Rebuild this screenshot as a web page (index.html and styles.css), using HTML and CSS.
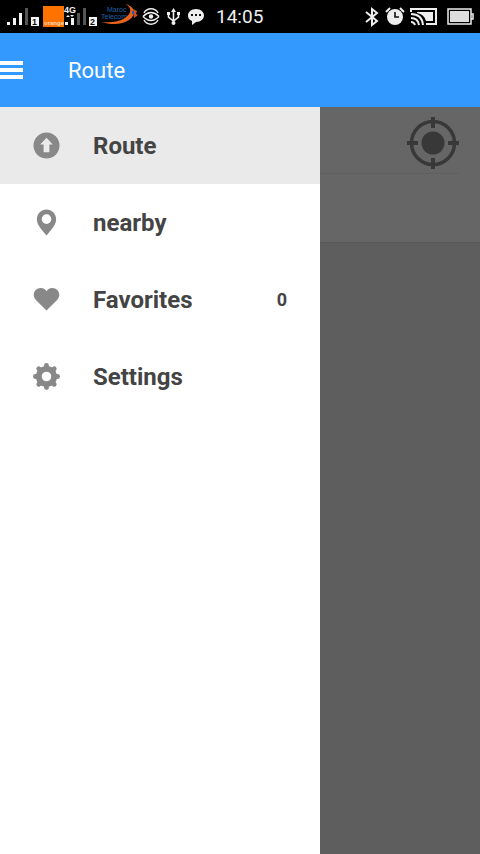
FILE: index.html
```html
<!DOCTYPE html>
<html lang="en">
<head>
<meta charset="utf-8">
<meta name="viewport" content="width=device-width, initial-scale=1">
<title>Route</title>
<link rel="stylesheet" href="styles.css">
</head>
<body>
<div class="status">
  <svg width="41" height="33" viewBox="0 0 41 33" aria-hidden="true">
    <path fill="#f4f4f4" d="M7 22h3v3H7zM13 18h3v7h-3zM19 13h3v12h-3z"/>
    <path fill="#555" d="M25 8h3v17h-3z"/>
    <rect x="31" y="17" width="8" height="9" fill="#f4f4f4"/>
    <text x="32" y="25" class="sim">1</text>
  </svg>
  <svg width="23" height="33" viewBox="0 0 23 33" aria-hidden="true">
    <rect x="2" y="6" width="21" height="21" fill="#ff7200"/>
    <text x="3" y="25" class="orange">orange</text>
  </svg>
  <svg width="34" height="33" viewBox="0 0 34 33" aria-hidden="true">
    <text x="0" y="13" class="net">4G</text>
    <path fill="#f4f4f4" d="M1 22h3v3H1zM7 18h3v7H7zM2 17l2-2 2 2zM6 15h4l-2 2z"/>
    <path fill="#555" d="M13 13h3v12h-3zM19 8h3v17h-3z"/>
    <rect x="25" y="17" width="8" height="9" fill="#f4f4f4"/>
    <text x="26" y="25" class="sim">2</text>
  </svg>
  <svg width="42" height="33" viewBox="0 0 42 33" aria-hidden="true">
    <text x="9" y="12" class="maroc">Maroc</text>
    <text x="3" y="19" class="maroc">Telecom</text>
    <path fill="#e8621c" d="M27 4c10 2 12 11 4 16-7 5-18 5-28 2 10 1 18 0 24-4 7-5 7-11 0-14z"/>
    <path fill="#c9521c" d="M35 9l4 2-1 3 2 1-4 3z"/>
    <path fill="#2360a8" d="M34 11h2v3h-2z"/>
  </svg>
  <svg width="22" height="33" viewBox="0 0 22 33" fill="none" stroke="#eee" stroke-width="1.5" aria-hidden="true">
    <path d="M4 13a8 8 0 0 1 14 0M4 20a8 8 0 0 0 14 0"/>
    <path d="M3 16.500q8-8 16 0M3 16.500q8 8 16 0"/>
    <circle cx="11" cy="16.500" r="2.200" fill="#eee" stroke="none"/>
  </svg>
  <svg width="23" height="33" viewBox="0 0 23 33" fill="none" stroke="#eee" stroke-width="1.6" aria-hidden="true">
    <path d="M11.500 11v13M6.500 13v4l5 4 5-4v-4"/>
    <path fill="#eee" stroke="none" d="M11.500 8l2.500 4H9zM5 12h3v3H5zM15 12h3v3h-3z"/>
    <circle cx="11.500" cy="23" r="2" fill="#eee" stroke="none"/>
  </svg>
  <svg width="25" height="33" viewBox="0 0 25 33" aria-hidden="true">
    <path fill="#eee" d="M11 9c5 0 8 3 8 6.500S16 22 11 22l-4 3v-4c-3-1-4-3-4-5.500C3 12 6 9 11 9z"/>
    <path fill="#111" d="M6 14h2v2H6zM10 14h2v2h-2zM14 14h2v2h-2z"/>
  </svg>
  <time class="clock">14:05</time>
  <div class="system">
    <svg width="16" height="33" viewBox="0 0 16 33" fill="none" stroke="#eee" stroke-width="2" aria-hidden="true">
      <path d="M2 12l11 9-5 4V9l5 4-11 9"/>
    </svg>
    <svg width="20" height="33" viewBox="0 0 20 33" aria-hidden="true">
      <circle cx="10" cy="17" r="8" fill="#eee"/>
      <path d="M1 12l4-4M19 12l-4-4" stroke="#eee" stroke-width="2"/>
      <path d="M10 12v5h4" fill="none" stroke="#111" stroke-width="1.600"/>
    </svg>
    <svg width="28" height="33" viewBox="0 0 28 33" fill="none" stroke="#eee" stroke-width="2" aria-hidden="true">
      <path d="M1 12V9h25v15H16"/>
      <path fill="#eee" stroke="none" d="M7 12h16v9h-7q-2-7-9-8z"/>
      <path d="M1 14q11 0 12 11M1 18q7 0 8 7M1 22q3 0 4 3"/>
    </svg>
    <svg class="battery" width="28" height="33" viewBox="0 0 28 33" aria-hidden="true">
      <path fill="none" stroke="#eee" stroke-width="1.500" d="M1 9h23v15H1zM24 14h2v5h-2"/>
      <path fill="#ddd" d="M3 11h19v11H3z"/>
    </svg>
  </div>
</div>

<header class="appbar">
  <button class="menu" type="button" aria-label="Menu">
    <svg width="24" height="20" viewBox="0 0 24 20" fill="#fff" aria-hidden="true"><path d="M0 1h23v4H0zM0 8h23v4H0zM0 15h23v4H0z"/></svg>
  </button>
  <h1 class="title">Route</h1>
</header>

<div class="body">
  <nav class="drawer">
    <a class="item active" href="#route">
      <svg class="icon" viewBox="0 0 28 28" aria-hidden="true"><path fill-rule="evenodd" d="M14 .5a13.500 13.500 0 1 0 0 27 13.500 13.500 0 0 0 0-27zM14 6l6.500 7H17v8h-6v-8H7.500z"/></svg>
      <span class="label">Route</span>
    </a>
    <a class="item" href="#nearby">
      <svg class="icon" viewBox="0 0 28 28" aria-hidden="true"><path fill-rule="evenodd" d="M14 .5C8.500.5 4 5 4 10.500 4 17 10 22 14 27.500 18 22 24 17 24 10.500 24 5 19.500.5 14 .5zM14 5.500a5 5 0 1 1 0 10 5 5 0 0 1 0-10z"/></svg>
      <span class="label">nearby</span>
    </a>
    <a class="item" href="#favorites">
      <svg class="icon" viewBox="0 0 28 28" aria-hidden="true"><path d="M14 25.500L3 14.500C-2 9 2 2 8 2c3 0 5 1.500 6 3.500C15 3.500 17 2 20 2c6 0 10 7 5 12.500z"/></svg>
      <span class="label">Favorites</span>
      <span class="count">0</span>
    </a>
    <a class="item" href="#settings">
      <svg class="icon" viewBox="0 0 28 28" aria-hidden="true">
        <path fill-rule="evenodd" d="M14 3a11 11 0 1 0 0 22 11 11 0 0 0 0-22zM14 9a5 5 0 1 1 0 10 5 5 0 0 1 0-10z"/>
        <path fill="none" stroke="#888" stroke-width="5" stroke-linecap="round" d="M14 2.500V5M14 23v2.500M2.500 14H5M23 14h2.500M6 6l1.600 1.600M20.400 20.400L22 22M22 6l-1.600 1.600M7.600 20.400L6 22"/>
      </svg>
      <span class="label">Settings</span>
    </a>
  </nav>
  <main class="page">
    <div class="search">
      <div class="field">
        <button class="locate" type="button" aria-label="Current location">
          <svg width="54" height="54" viewBox="0 0 54 54" fill="none" stroke="#383838" stroke-width="4" aria-hidden="true">
            <circle cx="27" cy="27" r="21.500" stroke-width="3.500"/>
            <circle cx="27" cy="27" r="11.500" fill="#383838" stroke="none"/>
            <path d="M27 1v11M27 42v11M1 27h11M42 27h11"/>
          </svg>
        </button>
      </div>
    </div>
  </main>
</div>
</body>
</html>
```

FILE: styles.css
```css
* {
  box-sizing: border-box;
}

body {
  margin: 0;
  min-height: 100vh;
  display: flex;
  flex-direction: column;
  font-family: Roboto, "Liberation Sans", sans-serif;
  background: #5e5e5e;
}

svg {
  display: block;
  flex: none;
}

button {
  border: 0;
  padding: 0;
  background: none;
}

.status {
  display: flex;
  align-items: center;
  height: 33px;
  background: #000;
  color: #eee;
}

.sim {
  font: bold 9px "Liberation Sans", sans-serif;
  fill: #111;
}

.orange {
  font: bold 6px "Liberation Sans", sans-serif;
  fill: #ffd9b8;
}

.net {
  font: bold 9px "Liberation Sans", sans-serif;
  fill: #f4f4f4;
}

.maroc {
  font: 7px "Liberation Sans", sans-serif;
  fill: #2360a8;
}

.clock {
  margin-left: 6px;
  font-size: 19px;
}

.system {
  display: flex;
  gap: 5px;
  margin-left: auto;
  padding-right: 5px;
}

.battery {
  margin-left: 4px;
}

.appbar {
  display: flex;
  align-items: center;
  gap: 44px;
  height: 74px;
  background: #3399ff;
  color: #fff;
}

.title {
  margin: 0;
  font-size: 22px;
  font-weight: 400;
}

.body {
  flex: 1;
  display: flex;
}

.drawer {
  width: 66.6667%;
  background: #fff;
}

.item {
  display: flex;
  align-items: center;
  height: 77px;
  padding: 0 33px;
  color: #444;
  font-weight: 700;
  text-decoration: none;
}

.active {
  background: #eaeaea;
}

.icon {
  width: 27px;
  height: 27px;
  margin-right: 33px;
  fill: #888;
}

.label {
  flex: 1;
  font-size: 24px;
}

.count {
  font-size: 18px;
}

.page {
  flex: 1;
}

.search {
  height: 136px;
  padding-right: 20px;
  background: #666;
  border-bottom: 1px solid #585858;
}

.field {
  display: flex;
  justify-content: flex-end;
  padding: 9px 0 3px;
  border-bottom: 1px solid #606060;
}
```
